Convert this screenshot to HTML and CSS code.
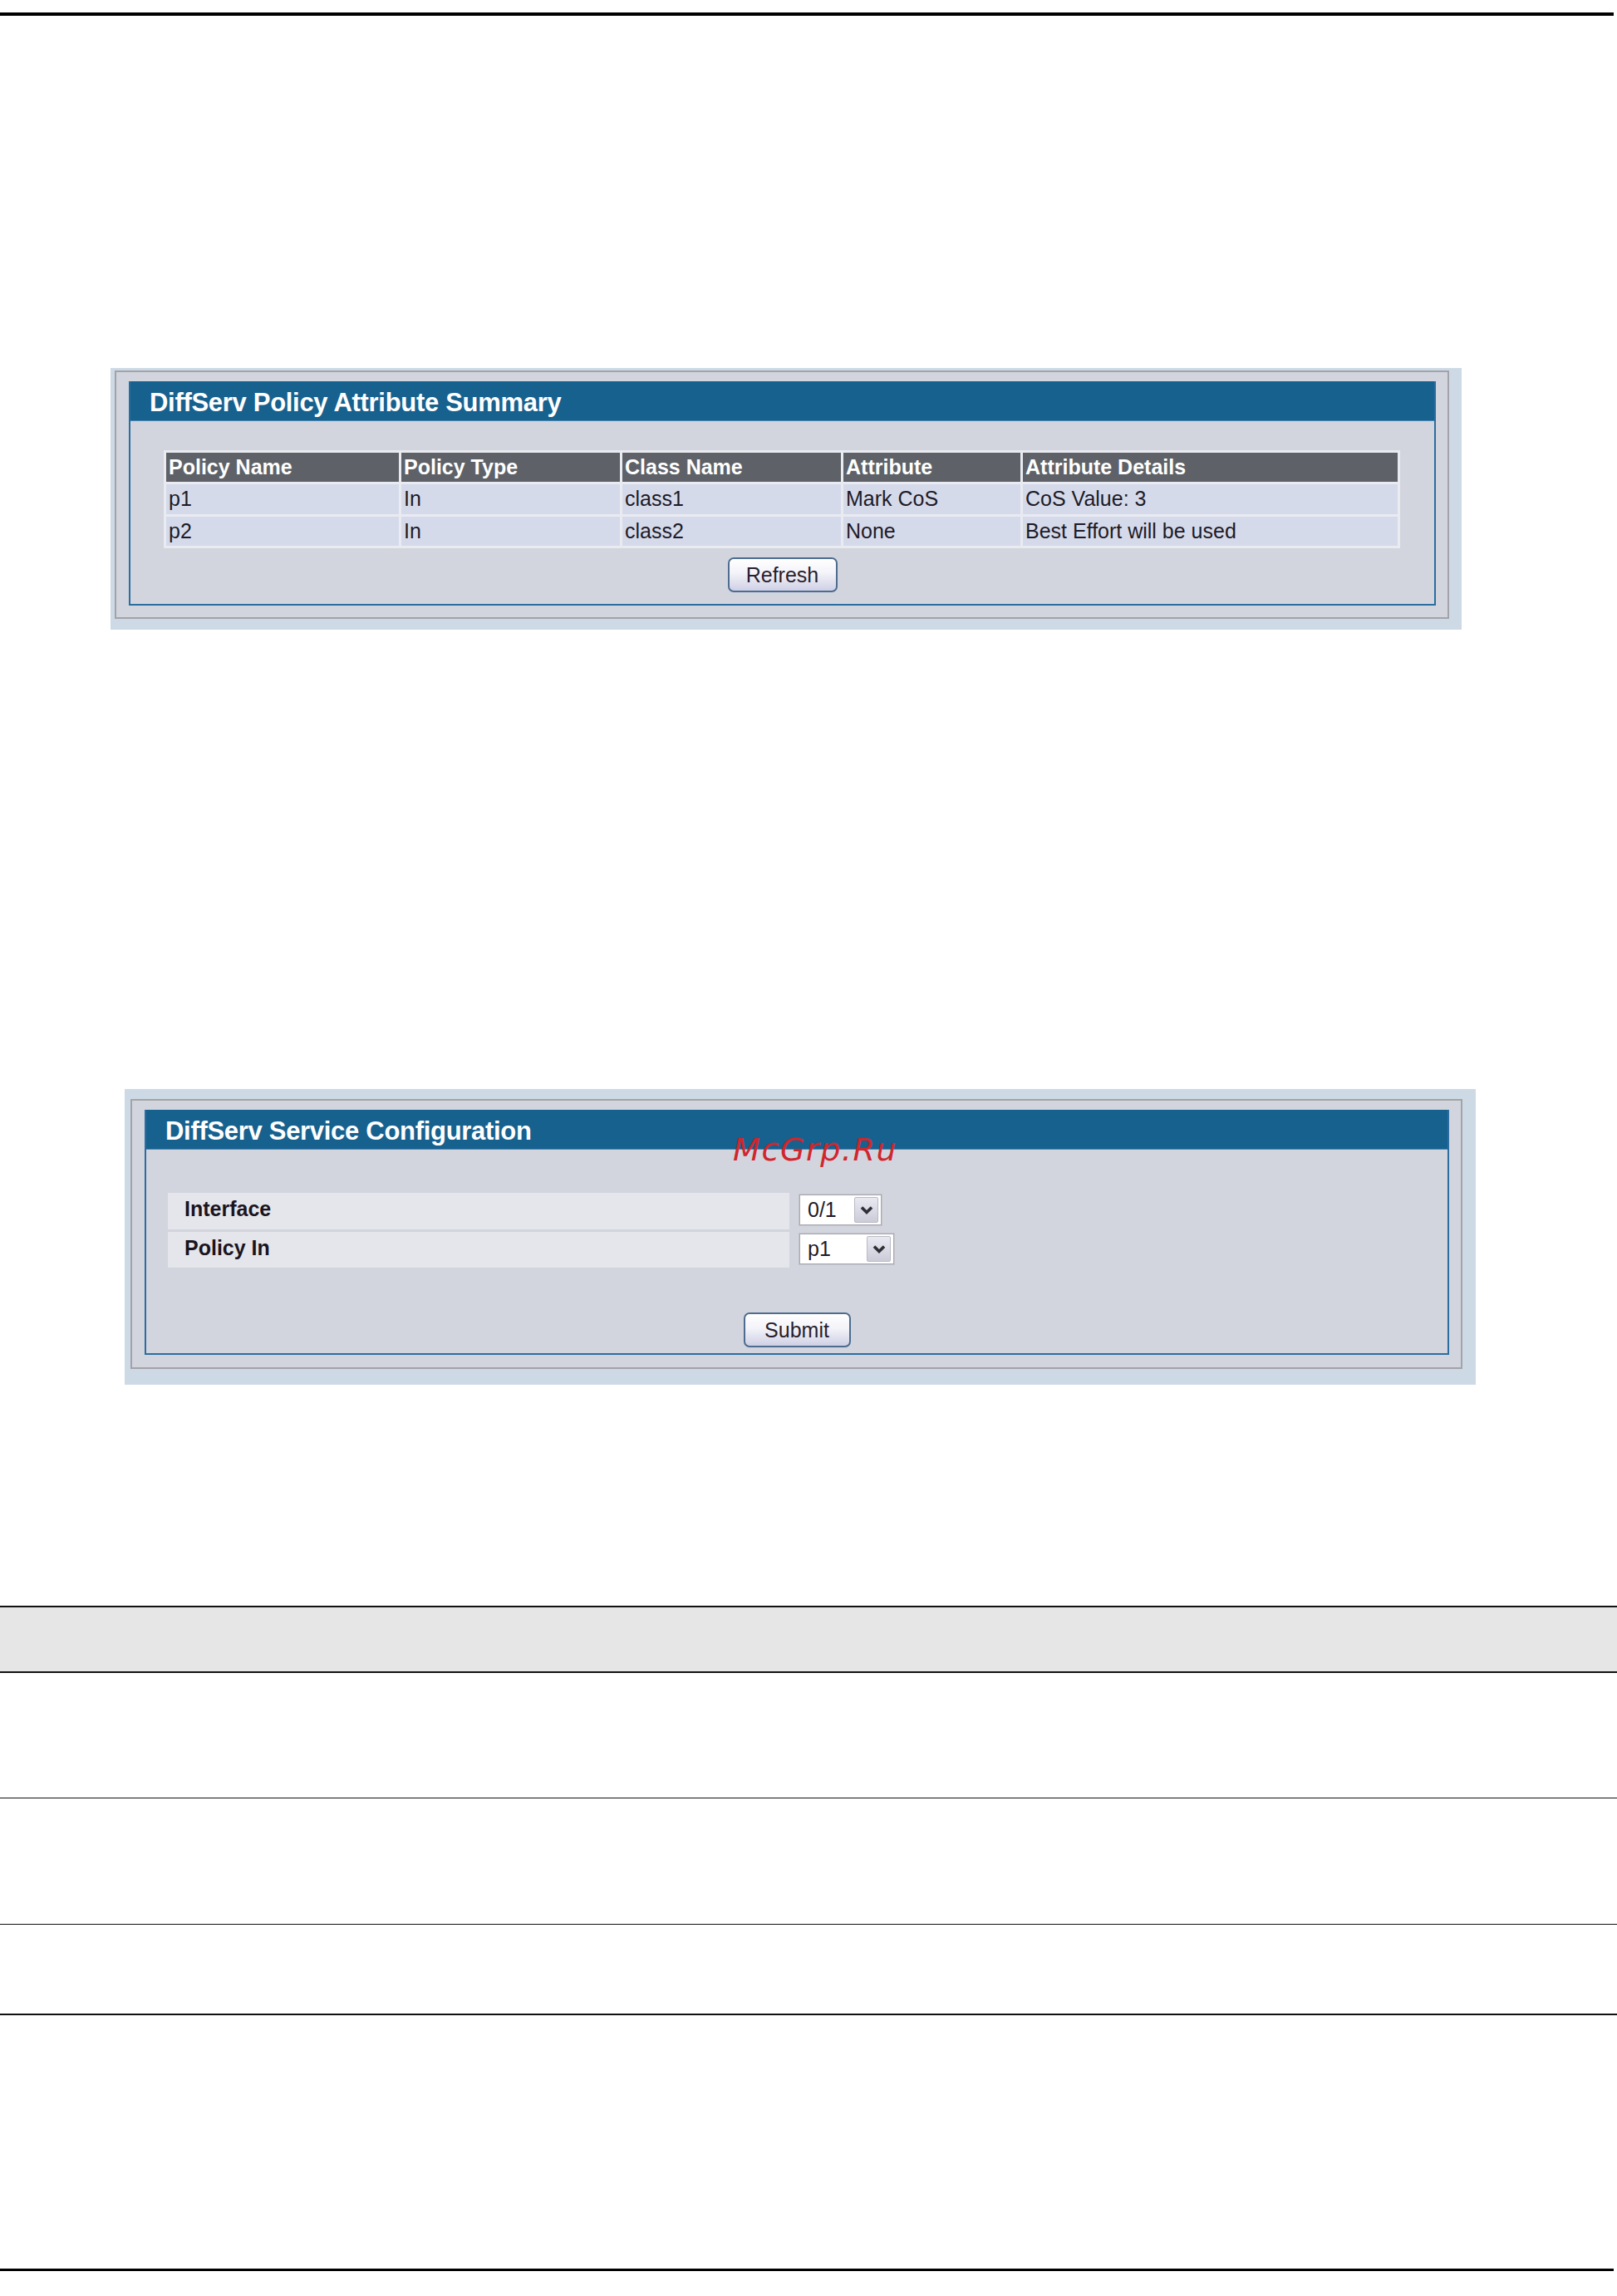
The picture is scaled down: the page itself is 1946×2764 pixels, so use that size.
FILE: index.html
```html
<!DOCTYPE html>
<html lang="en">
<head>
<meta charset="utf-8">
<title>DiffServ</title>
<link rel="stylesheet" href="styles.css">
</head>
<body>
<div class="rule rule-top"></div>

<section class="frame frame-summary">
  <div class="box box-summary">
    <div class="panel">
      <div class="panel-head">DiffServ Policy Attribute Summary</div>
      <div class="panel-body body-summary">
        <table class="grid">
          <thead>
            <tr>
              <th class="c1">Policy Name</th>
              <th class="c2">Policy Type</th>
              <th class="c3">Class Name</th>
              <th class="c4">Attribute</th>
              <th class="c5">Attribute Details</th>
            </tr>
          </thead>
          <tbody>
            <tr>
              <td>p1</td>
              <td>In</td>
              <td>class1</td>
              <td>Mark CoS</td>
              <td>CoS Value: 3</td>
            </tr>
            <tr>
              <td>p2</td>
              <td>In</td>
              <td>class2</td>
              <td>None</td>
              <td>Best Effort will be used</td>
            </tr>
          </tbody>
        </table>
        <div class="actions actions-summary"><button class="btn btn-refresh" type="button">Refresh</button></div>
      </div>
    </div>
  </div>
</section>

<section class="frame frame-config">
  <div class="box box-config">
    <div class="panel">
      <div class="panel-head">DiffServ Service Configuration</div>
      <div class="panel-body body-config">
        <div class="form">
          <div class="form-label row-1">Interface</div>
          <div class="form-field row-1">
            <div class="select select-if">
              <span class="select-value">0/1</span>
              <span class="select-btn"><svg width="18" height="12" viewBox="0 0 18 12"><polyline points="3,2.5 9,8.5 15,2.5" fill="none" stroke="#2e2e36" stroke-width="3.6"/></svg></span>
            </div>
          </div>
          <div class="form-label row-2">Policy In</div>
          <div class="form-field row-2">
            <div class="select select-policy">
              <span class="select-value">p1</span>
              <span class="select-btn"><svg width="18" height="12" viewBox="0 0 18 12"><polyline points="3,2.5 9,8.5 15,2.5" fill="none" stroke="#2e2e36" stroke-width="3.6"/></svg></span>
            </div>
          </div>
        </div>
        <div class="actions actions-config"><button class="btn btn-submit" type="button">Submit</button></div>
      </div>
    </div>
  </div>
  <div class="watermark">McGrp.Ru</div>
</section>

<div class="doc-table">
  <div class="doc-row doc-head"></div>
  <div class="doc-row doc-r1"></div>
  <div class="doc-row doc-r2"></div>
  <div class="doc-row doc-r3"></div>
</div>

<div class="rule rule-bottom"></div>
</body>
</html>
```

FILE: styles.css
```css
* { box-sizing: border-box; }

html, body {
  margin: 0;
  padding: 0;
  background: #ffffff;
}

body {
  width: 1946px;
  height: 2764px;
  padding-top: 15px;
  font-family: "Liberation Sans", Arial, sans-serif;
  color: #1e1a26;
  overflow: hidden;
}

.rule {
  background: #000;
  width: 1942px;
}
.rule-top { height: 4px; }
.rule-bottom { height: 3px; margin-top: 305px; }

/* outer light-blue frame */
.frame {
  background: #cddae5;
}
.frame-summary {
  margin: 424px 0 0 133px;
  padding: 3px 15px 13px 5px;
  width: 1626px;
}
.frame-config {
  position: relative;
  margin: 553px 0 0 150px;
  padding: 12px 16px 19px 7px;
  width: 1626px;
}

/* gray bordered box */
.box {
  background: #d2d5de;
  border: 2px solid #a2a3a8;
}
.box-summary { padding: 11px 14px 14px 15px; }
.box-config  { padding: 11px 14px 15px 15px; }

/* blue titled panel */
.panel {
  border: 2px solid #2a6d9e;
  border-top: 0;
  background: #d2d5de;
}
.panel-head {
  height: 48px;
  background: #17618f;
  border-bottom: 1px solid #4b86b3;
  color: #ffffff;
  font-weight: bold;
  font-size: 31px;
  line-height: 42px;
  padding: 5px 0 0 23px;
  letter-spacing: -0.3px;
}

.body-summary { padding: 35px 0 14px 40px; }
.body-config  { padding: 52px 0 7px 26px; }

/* summary table */
.grid {
  table-layout: fixed;
  width: 1488px;
  border-spacing: 3px;
  background: #e9ebf1;
  font-size: 25px;
}
.grid th, .grid td {
  padding: 0 0 0 3px;
  text-align: left;
  white-space: nowrap;
  vertical-align: middle;
}
.grid th {
  background: #5e6268;
  color: #ffffff;
  font-weight: bold;
  height: 35px;
}
.grid td {
  background: #d5daeb;
  height: 35.5px;
  color: #1e1a26;
}
.grid .c1 { width: 280px; }
.grid .c2 { width: 263px; }
.grid .c3 { width: 263px; }
.grid .c4 { width: 213px; }
.grid .c5 { width: 451px; }

.actions {
  display: flex;
  justify-content: center;
}
.actions-summary { margin: 11px 40px 0 0; }
.actions-config  { margin: 54px 26px 0 0; }

.btn {
  height: 42px;
  padding: 0;
  border: 2px solid #4d6c8f;
  border-radius: 7px;
  background: linear-gradient(#ffffff 0%, #f3f3f9 45%, #cfd0e5 100%);
  font-family: "Liberation Sans", Arial, sans-serif;
  font-size: 25px;
  color: #2a1e2c;
}
.btn-refresh { width: 132px; }
.btn-submit  { width: 129px; }

/* configuration form */
.form {
  display: grid;
  grid-template-columns: 748px auto;
  grid-template-rows: 44px 43px;
  column-gap: 12px;
  row-gap: 3px;
}
.form-label {
  background: #e5e6ec;
  font-weight: bold;
  font-size: 25px;
  line-height: 28px;
  padding: 5px 0 0 20px;
  color: #1a1420;
}
.form-field {
  padding-top: 2px;
}

.select {
  display: flex;
  height: 37px;
  border: 1px solid #a8a9b0;
  box-shadow: 0 0 0 1px #c4c5cc;
  background: #ffffff;
}
.select-if { width: 99px; }
.select-policy { width: 114px; }
.select-value {
  flex: 1;
  font-size: 25px;
  line-height: 35px;
  padding-left: 9px;
  color: #1e1a26;
}
.select-btn {
  width: 29px;
  height: 31px;
  margin: 2px 3px 2px 0;
  border: 1px solid #b9bac4;
  border-radius: 2px;
  background: linear-gradient(#e8e9f1, #cbccd9);
  display: flex;
  align-items: center;
  justify-content: center;
}

.watermark {
  position: absolute;
  left: 732px;
  top: 54px;
  font-family: "DejaVu Sans", Verdana, sans-serif;
  font-style: italic;
  font-size: 38px;
  line-height: 38px;
  letter-spacing: 1.6px;
  color: #d0262c;
  white-space: nowrap;
}

/* lower document table */
.doc-table {
  margin-top: 266px;
  width: 1946px;
}
.doc-row { width: 100%; }
.doc-head {
  height: 81px;
  background: #e6e6e6;
  border-top: 2px solid #111;
  border-bottom: 2px solid #111;
}
.doc-r1 { height: 151px; border-bottom: 1px solid #111; }
.doc-r2 { height: 152px; border-bottom: 1px solid #111; }
.doc-r3 { height: 109px; border-bottom: 2px solid #111; }
```
